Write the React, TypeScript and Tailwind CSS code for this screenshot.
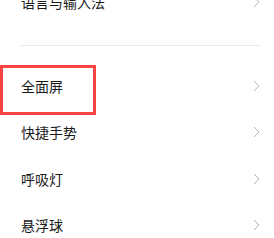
function Chevron() {
  return (
    <svg width="7" height="12" viewBox="0 0 7 12" fill="none" className="shrink-0">
      <path d="M1 1l5 5-5 5" stroke="#b5b5b5" strokeWidth="1" />
    </svg>
  );
}

function Row({ label, highlight }: { label: string; highlight?: boolean }) {
  return (
    <div className="relative flex h-[46.5px] items-center justify-between pl-[21px] pr-[14px]">
      <span className="text-[14px] leading-none text-[#1a1a1a]">{label}</span>
      <Chevron />
      {highlight && (
        <div className="pointer-events-none absolute left-0 top-[2px] h-[50px] w-[96px] border-[3px] border-[#fb4141]" />
      )}
    </div>
  );
}

export default function App() {
  return (
    <div
      className="h-[238px] w-[274px] overflow-hidden bg-white"
      style={{ fontFamily: '"Noto Sans CJK SC", "Noto Sans", sans-serif' }}
    >
      <div className="-mt-[21px]">
        <Row label="语言与输入法" />
        <div className="mt-[19px] ml-[20px] mr-[13px] h-px bg-[#ebebeb]" />
        <div className="mt-[17px]">
          <Row label="全面屏" highlight />
          <Row label="快捷手势" />
          <Row label="呼吸灯" />
          <Row label="悬浮球" />
        </div>
      </div>
    </div>
  );
}
